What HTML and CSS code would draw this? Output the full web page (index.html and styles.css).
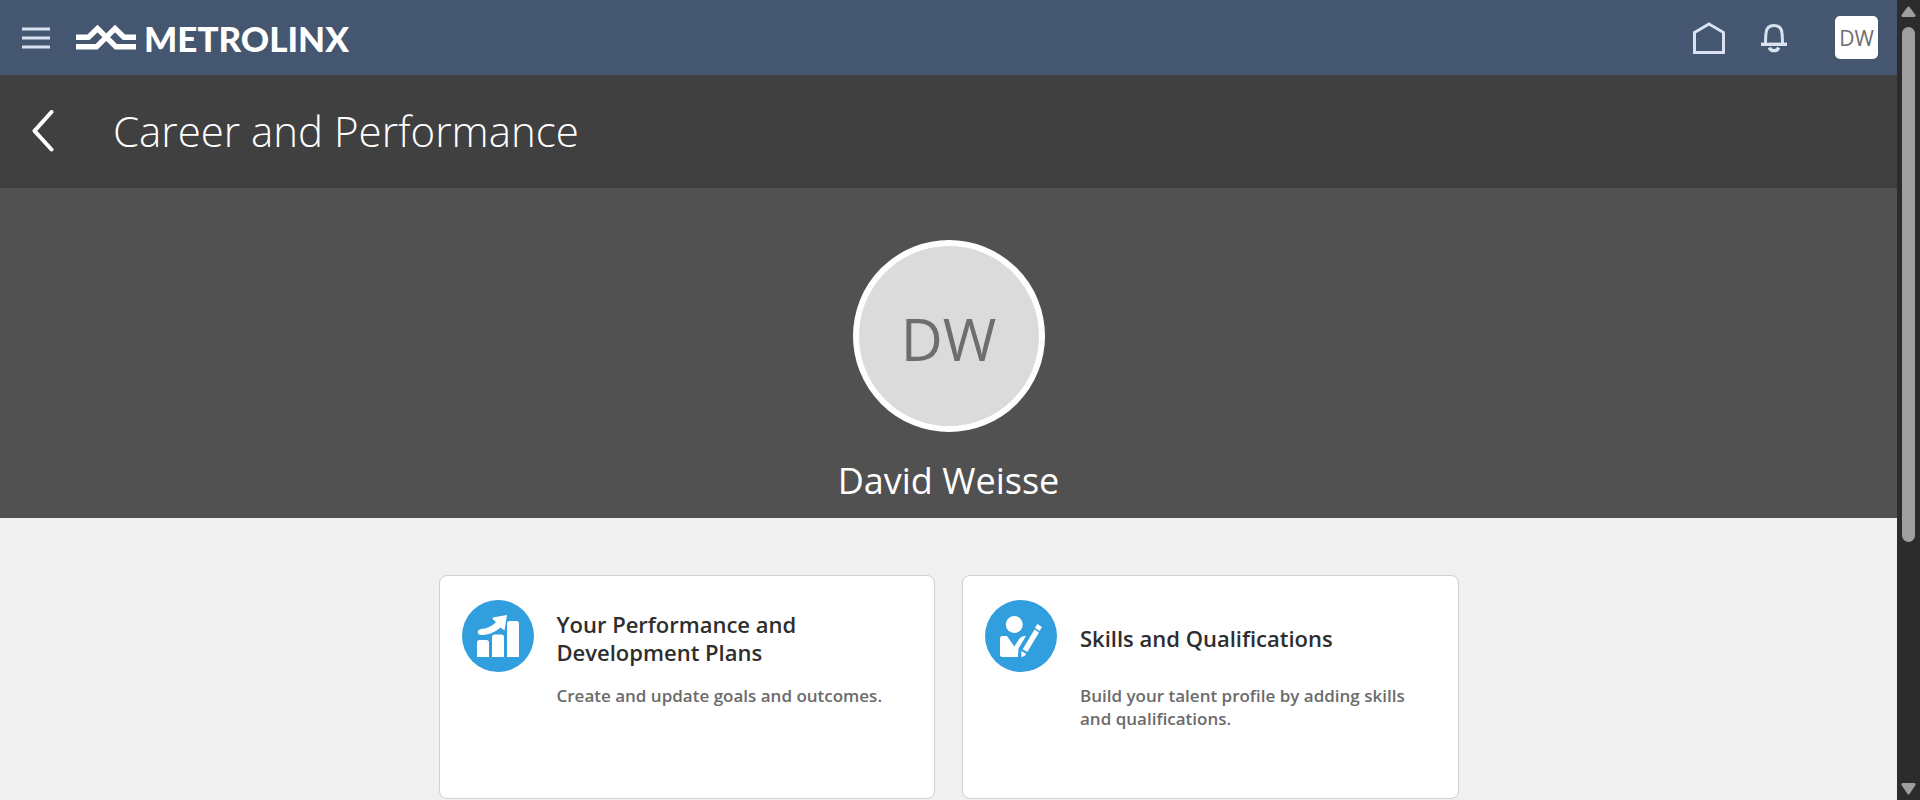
FILE: index.html
```html
<!DOCTYPE html>
<html lang="en">
<head>
<meta charset="utf-8">
<title>Career and Performance</title>
<link rel="stylesheet" href="styles.css">
</head>
<body>
<div class="shell">
  <div class="page">
    <header class="topbar">
      <button class="icon-button menu" type="button" aria-label="Navigator">
        <svg width="28" height="22" viewBox="0 0 28 22" fill="none" stroke="#d9e2f0" stroke-width="3"><path d="M0 2h28M0 11h28M0 20h28"/></svg>
      </button>
      <a class="brand" href="#">
        <svg width="60" height="26" viewBox="0 0 60 26" fill="none" stroke="#fff" stroke-width="5.4"><path d="M0 12.300H12.500L21.500 3.500L40 21.800H60M0 21.800H20.500L39 3.500L48 12.300H60"/></svg>
        <span class="brand-name">METROLINX</span>
      </a>
      <nav class="tools">
        <a class="tool" href="#" aria-label="Home">
          <svg width="32" height="32" viewBox="0 0 32 32" fill="none" stroke="#d9e2f0" stroke-width="3"><path d="M1.500 10.500L16 2L30.500 10.500V30.500H1.500Z"/></svg>
        </a>
        <button class="icon-button" type="button" aria-label="Notifications">
          <svg width="26" height="30" viewBox="0 0 26 30" fill="none" stroke="#d9e2f0"><path stroke-width="3" d="M4.200 21C4.800 18 4.500 14 5 10C5.500 5 8.500 2.500 13 2.500S20.500 5 21 10C21.500 14 21.200 18 21.800 21"/><path stroke-width="3.400" d="M0 21.300H26"/><path stroke-width="3.400" d="M8.500 24.500C9.500 28.700 16.500 28.700 17.500 24.500"/></svg>
        </button>
        <button class="user" type="button" aria-label="Settings and Actions">DW</button>
      </nav>
    </header>
    <div class="titlebar">
      <button class="icon-button" type="button" aria-label="Back">
        <svg width="22" height="42" viewBox="0 0 22 42" fill="none" stroke="#fff" stroke-width="4" stroke-linecap="round" stroke-linejoin="round"><path d="M19.500 2L2.500 20.800L19.500 39.500"/></svg>
      </button>
      <h1 class="title">Career and Performance</h1>
    </div>
    <section class="hero">
      <div class="avatar">DW</div>
      <h2 class="person">David Weisse</h2>
    </section>
    <main class="cards">
      <a class="card" href="#">
        <svg class="card-icon" viewBox="0 0 72 72"><circle cx="36" cy="36" r="36" fill="#319edd"/><g fill="#fff"><path d="M15 57V42.500Q15 40 17.500 40H24.500Q27 40 27 42.500V57Z"/><path d="M30 57V37Q30 34.500 32.500 34.500H39.500Q42 34.500 42 37V57Z"/><path d="M45 57V23.500Q45 21 47.500 21H54.500Q57 21 57 23.500V57Z"/><path d="M45 15L42.500 30.500L38.500 27.500C33 32.500 26 35 18.500 35Q15.500 34 15.800 31.500Q16 29.500 18.500 29.200C25 28.500 30 26.500 34 22L30.500 19Q30.300 17.500 32 17.200Z"/></g></svg>
        <h3 class="card-title">Your Performance and Development Plans</h3>
        <p class="card-text">Create and update goals and outcomes.</p>
      </a>
      <a class="card" href="#">
        <svg class="card-icon" viewBox="0 0 72 72"><circle cx="36" cy="36" r="36" fill="#319edd"/><g fill="#fff"><circle cx="29.300" cy="24.500" r="8.500"/><path d="M33 57H17.500Q15 57 15 54.500V38.500Q15 36 17.500 36H22L29.300 46.500L34.500 38.500Q36.500 36 39.500 36H41L33.500 48.500Z"/><path d="M49.500 29.500L54 32.500L42.300 52L37.700 49.200Z"/><path d="M52.300 24L57 27L54.600 31L50 28Z"/><path d="M36.300 51L41 53.800Q40.500 56.500 36.300 57Z"/></g></svg>
        <h3 class="card-title">Skills and Qualifications</h3>
        <p class="card-text">Build your talent profile by adding skills and qualifications.</p>
      </a>
    </main>
  </div>
  <div class="scrollbar" aria-hidden="true">
    <svg width="15" height="11" viewBox="0 0 15 11" fill="#9f9f9f"><path d="M6.500 1Q7.500 0 8.500 1L14.500 9Q15 11 13 11H2Q0 11 .5 9Z"/></svg>
    <div class="track"><div class="thumb"></div></div>
    <svg width="15" height="12" viewBox="0 0 15 12" fill="#9f9f9f"><path d="M6.500 11Q7.500 12 8.500 11L14.500 2Q15 0 13 0H2Q0 0 .5 2Z"/></svg>
  </div>
</div>
</body>
</html>
```
FILE: styles.css
```css
* { box-sizing: border-box; }
body {
  margin: 0;
  background: #f0f0f0;
  font-family: "Open Sans", "Noto Sans", sans-serif;
}
h1, h2, h3, p { margin: 0; }
a { color: inherit; text-decoration: none; }
button { font: inherit; cursor: pointer; }
svg { display: block; flex: none; }

.shell { display: flex; min-height: 100vh; }
.page { flex: 1; min-width: 0; }

.icon-button { padding: 0; border: 0; background: none; }

.topbar {
  display: flex;
  align-items: center;
  height: 75px;
  padding: 0 19px 0 22px;
  background: #455670;
}
.brand {
  display: flex;
  align-items: center;
  gap: 8px;
  margin-left: 26px;
}
.brand-name {
  color: #fff;
  font-family: Lato, sans-serif;
  font-size: 35px;
  font-weight: 900;
  line-height: 40px;
}
.tools {
  display: flex;
  align-items: center;
  margin-left: auto;
}
.tool { margin-right: 36px; }
.user {
  width: 43px;
  height: 43px;
  margin-left: 48px;
  padding: 0;
  border: 0;
  border-radius: 5px;
  background: #fff;
  color: #6e6e6e;
  font-size: 21px;
}

.titlebar {
  display: flex;
  align-items: center;
  gap: 59px;
  height: 113px;
  padding: 0 32px 2px;
  background: #404040;
}
.title {
  color: #fff;
  font-size: 42px;
  font-weight: 300;
  line-height: 60px;
}

.hero {
  display: flex;
  flex-direction: column;
  align-items: center;
  gap: 24px;
  padding: 52px 24px 12px;
  background: #515151;
}
.avatar {
  display: flex;
  align-items: center;
  justify-content: center;
  width: 192px;
  height: 192px;
  padding-top: 4px;
  border: 6px solid #fff;
  border-radius: 50%;
  background: #dbdbdb;
  color: #6e6e6e;
  font-size: 58px;
}
.person {
  color: #fff;
  font-size: 36px;
  font-weight: 400;
  line-height: 50px;
}

.cards {
  display: grid;
  grid-template-columns: 1fr 1fr;
  gap: 27px;
  max-width: 1068px;
  margin: 0 auto;
  padding: 57px 24px 0;
}
.card {
  display: grid;
  grid-template-columns: 72px 1fr;
  grid-template-rows: 76px auto;
  column-gap: 23px;
  align-content: start;
  min-height: 224px;
  padding: 24px 22px;
  border: 1px solid #d0d0d0;
  border-radius: 8px;
  background: #fff;
}
.card-icon { width: 72px; height: 72px; }
.card-title {
  align-self: center;
  max-width: 280px;
  color: #2e2e2e;
  font-size: 22px;
  font-weight: 600;
  line-height: 28px;
}
.card-text {
  grid-column: 2;
  padding-top: 8px;
  color: #6b6b6b;
  font-size: 17px;
  font-weight: 600;
  line-height: 23px;
}

.scrollbar {
  display: flex;
  flex-direction: column;
  align-items: center;
  gap: 10px;
  width: 23px;
  padding: 6px 0 5px;
  background: #2c2c2c;
}
.track { flex: 1; width: 13px; }
.thumb {
  height: 69%;
  border-radius: 7px;
  background: #9f9f9f;
}
```
